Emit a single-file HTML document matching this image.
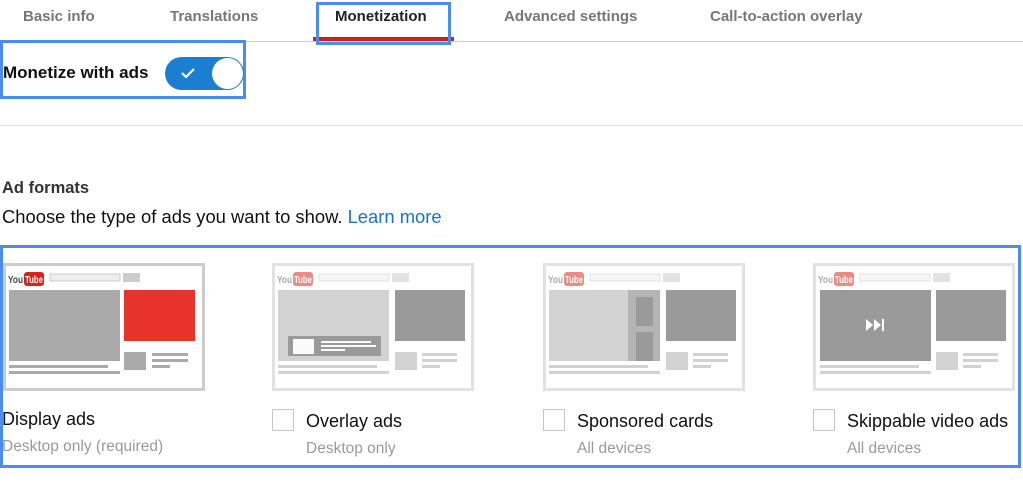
<!DOCTYPE html><html><head><style>
*{margin:0;padding:0;box-sizing:border-box}
body{width:1023px;height:501px;background:#fff;position:relative;overflow:hidden;font-family:"Liberation Sans",Arial,sans-serif;color:#111}
.a{position:absolute;white-space:nowrap}
.tab{top:8px;font-size:15px;font-weight:bold;color:#777}
.lbl{font-size:18px;color:#111}
.sub{font-size:15.5px;color:#9a9a9a}
.cb{position:absolute;width:22px;height:22px;border:1.5px solid #c6c6c6;background:#fff}
svg{position:absolute}
</style></head><body>
<div class="a tab" style="left:23px">Basic info</div>
<div class="a tab" style="left:170px">Translations</div>
<div class="a tab" style="left:335px;color:#222">Monetization</div>
<div class="a tab" style="left:504px">Advanced settings</div>
<div class="a tab" style="left:710px">Call-to-action overlay</div>
<div class="a" style="left:0;top:41px;width:1023px;height:1px;background:#ccc"></div>
<div class="a" style="left:313px;top:37px;width:141px;height:4px;background:#cc1f1f"></div>
<div class="a" style="left:316px;top:2px;width:135px;height:43px;border:3px solid #4a8cf0"></div>

<div class="a" style="left:0;top:40px;width:246px;height:59px;border:3px solid #4a8cf0"></div>
<div class="a" style="left:3px;top:63px;font-size:17px;font-weight:bold;color:#111">Monetize with ads</div>
<div class="a" style="left:165px;top:57px;width:79px;height:33px;border-radius:17px;background:#1a7fd0"></div>
<div class="a" style="left:212px;top:58px;width:31px;height:31px;border-radius:50%;background:#fff"></div>
<svg style="left:180px;top:66px" width="16" height="14" viewBox="0 0 16 14"><path d="M2 7 L6 11 L14 3" stroke="#fff" stroke-width="2.2" fill="none"/></svg>

<div class="a" style="left:0;top:125px;width:1023px;height:1px;background:#ddd"></div>
<div class="a" style="left:2px;top:179px;font-size:16.5px;font-weight:bold;color:#333">Ad formats</div>
<div class="a" style="left:2px;top:206px;font-size:18.4px;color:#111">Choose the type of ads you want to show. <span style="color:#1a73c8">Learn more</span></div>

<div class="a" style="left:0;top:245px;width:1021px;height:223px;border:3px solid #4a8cf0"></div>

<svg style="left:3px;top:263px" width="202" height="128" viewBox="0 0 202 128">
<rect x="1.5" y="1.5" width="199" height="125" fill="#fff" stroke="#ccc" stroke-width="3"/>
<text x="5" y="20" font-size="10" textLength="15" lengthAdjust="spacingAndGlyphs" font-family="Liberation Sans,sans-serif" fill="#444" font-weight="bold">You</text>
<rect x="21" y="9" width="20" height="14" rx="3" fill="#d92121"/><text x="22" y="20" font-size="10" textLength="18" lengthAdjust="spacingAndGlyphs" fill="#fff" font-family="Liberation Sans,sans-serif" font-weight="bold">Tube</text>
<rect x="47" y="11" width="70" height="7" fill="#eee" stroke="#ccc"/><rect x="120" y="10" width="17" height="9" fill="#ccc"/>
<rect x="6" y="27" width="111" height="71" fill="#aaa"/>
<rect x="121" y="27" width="71" height="51" fill="#e8332b"/>
<rect x="121" y="89" width="22" height="18" fill="#aaa"/>
<rect x="149" y="90" width="36" height="3" fill="#aaa"/><rect x="149" y="96" width="36" height="3" fill="#aaa"/><rect x="149" y="102" width="18" height="3" fill="#aaa"/>
<rect x="6" y="102" width="99" height="3" fill="#aaa"/><rect x="6" y="108" width="111" height="3" fill="#aaa"/>
</svg>
<svg style="left:272px;top:263px" width="202" height="128" viewBox="0 0 202 128">
<rect x="1.5" y="1.5" width="199" height="125" fill="#fff" stroke="#e2e2e2" stroke-width="3"/>
<text x="5" y="20" font-size="10" textLength="15" lengthAdjust="spacingAndGlyphs" font-family="Liberation Sans,sans-serif" fill="#aaa" font-weight="bold">You</text>
<rect x="21" y="9" width="20" height="14" rx="3" fill="#ec8a86"/><text x="22" y="20" font-size="10" textLength="18" lengthAdjust="spacingAndGlyphs" fill="#fff" font-family="Liberation Sans,sans-serif" font-weight="bold">Tube</text>
<rect x="47" y="11" width="70" height="7" fill="#f6f6f6" stroke="#e2e2e2"/><rect x="120" y="10" width="17" height="9" fill="#e2e2e2"/>
<rect x="6" y="27" width="111" height="71" fill="#d2d2d2"/>
<rect x="16" y="73" width="93" height="20" fill="#9a9a9a"/><rect x="21" y="76" width="21" height="15" fill="#fafafa"/>
<rect x="49" y="78" width="50" height="2" fill="#fafafa"/><rect x="49" y="82" width="55" height="2" fill="#fafafa"/><rect x="49" y="86" width="24" height="2" fill="#fafafa"/>
<rect x="123" y="27" width="70" height="51" fill="#9a9a9a"/>
<rect x="123" y="89" width="22" height="18" fill="#d2d2d2"/>
<rect x="150" y="90" width="35" height="3" fill="#d2d2d2"/><rect x="150" y="96" width="35" height="3" fill="#d2d2d2"/><rect x="150" y="102" width="18" height="3" fill="#d2d2d2"/>
<rect x="6" y="102" width="99" height="3" fill="#d2d2d2"/><rect x="6" y="108" width="111" height="3" fill="#d2d2d2"/>
</svg>
<svg style="left:543px;top:263px" width="202" height="128" viewBox="0 0 202 128">
<rect x="1.5" y="1.5" width="199" height="125" fill="#fff" stroke="#e2e2e2" stroke-width="3"/>
<text x="5" y="20" font-size="10" textLength="15" lengthAdjust="spacingAndGlyphs" font-family="Liberation Sans,sans-serif" fill="#aaa" font-weight="bold">You</text>
<rect x="21" y="9" width="20" height="14" rx="3" fill="#ec8a86"/><text x="22" y="20" font-size="10" textLength="18" lengthAdjust="spacingAndGlyphs" fill="#fff" font-family="Liberation Sans,sans-serif" font-weight="bold">Tube</text>
<rect x="47" y="11" width="70" height="7" fill="#f6f6f6" stroke="#e2e2e2"/><rect x="120" y="10" width="17" height="9" fill="#e2e2e2"/>
<rect x="6" y="27" width="111" height="71" fill="#d2d2d2"/>
<rect x="85" y="27" width="32" height="71" fill="#b4b4b4"/>
<rect x="93" y="34" width="17" height="29" fill="#9a9a9a"/><rect x="93" y="69" width="17" height="29" fill="#9a9a9a"/>
<rect x="123" y="27" width="70" height="51" fill="#9a9a9a"/>
<rect x="123" y="89" width="22" height="18" fill="#d2d2d2"/>
<rect x="150" y="90" width="35" height="3" fill="#d2d2d2"/><rect x="150" y="96" width="35" height="3" fill="#d2d2d2"/><rect x="150" y="102" width="18" height="3" fill="#d2d2d2"/>
<rect x="6" y="102" width="99" height="3" fill="#d2d2d2"/><rect x="6" y="108" width="111" height="3" fill="#d2d2d2"/>
</svg>
<svg style="left:813px;top:263px" width="202" height="128" viewBox="0 0 202 128">
<rect x="1.5" y="1.5" width="199" height="125" fill="#fff" stroke="#e2e2e2" stroke-width="3"/>
<text x="5" y="20" font-size="10" textLength="15" lengthAdjust="spacingAndGlyphs" font-family="Liberation Sans,sans-serif" fill="#aaa" font-weight="bold">You</text>
<rect x="21" y="9" width="20" height="14" rx="3" fill="#ec8a86"/><text x="22" y="20" font-size="10" textLength="18" lengthAdjust="spacingAndGlyphs" fill="#fff" font-family="Liberation Sans,sans-serif" font-weight="bold">Tube</text>
<rect x="47" y="11" width="70" height="7" fill="#f6f6f6" stroke="#e2e2e2"/><rect x="120" y="10" width="17" height="9" fill="#e2e2e2"/>
<rect x="7" y="27" width="111" height="71" fill="#9a9a9a"/>
<path d="M53 56 L60 62 L53 68 Z M61 56 L68 62 L61 68 Z" fill="#fff"/><rect x="69" y="56" width="2" height="12" fill="#fff"/>
<rect x="123" y="27" width="70" height="51" fill="#9a9a9a"/>
<rect x="123" y="89" width="22" height="18" fill="#d2d2d2"/>
<rect x="150" y="90" width="35" height="3" fill="#d2d2d2"/><rect x="150" y="96" width="35" height="3" fill="#d2d2d2"/><rect x="150" y="102" width="18" height="3" fill="#d2d2d2"/>
<rect x="7" y="102" width="99" height="3" fill="#d2d2d2"/><rect x="7" y="108" width="111" height="3" fill="#d2d2d2"/>
</svg>

<div class="a lbl" style="left:2px;top:409px">Display ads</div>
<div class="a sub" style="left:2px;top:438px">Desktop only (required)</div>
<div class="cb" style="left:272px;top:409px"></div>
<div class="a lbl" style="left:306px;top:411px">Overlay ads</div>
<div class="a sub" style="left:306px;top:440px">Desktop only</div>
<div class="cb" style="left:543px;top:409px"></div>
<div class="a lbl" style="left:577px;top:411px">Sponsored cards</div>
<div class="a sub" style="left:577px;top:440px">All devices</div>
<div class="cb" style="left:813px;top:409px"></div>
<div class="a lbl" style="left:847px;top:411px">Skippable video ads</div>
<div class="a sub" style="left:847px;top:440px">All devices</div>
</body></html>
